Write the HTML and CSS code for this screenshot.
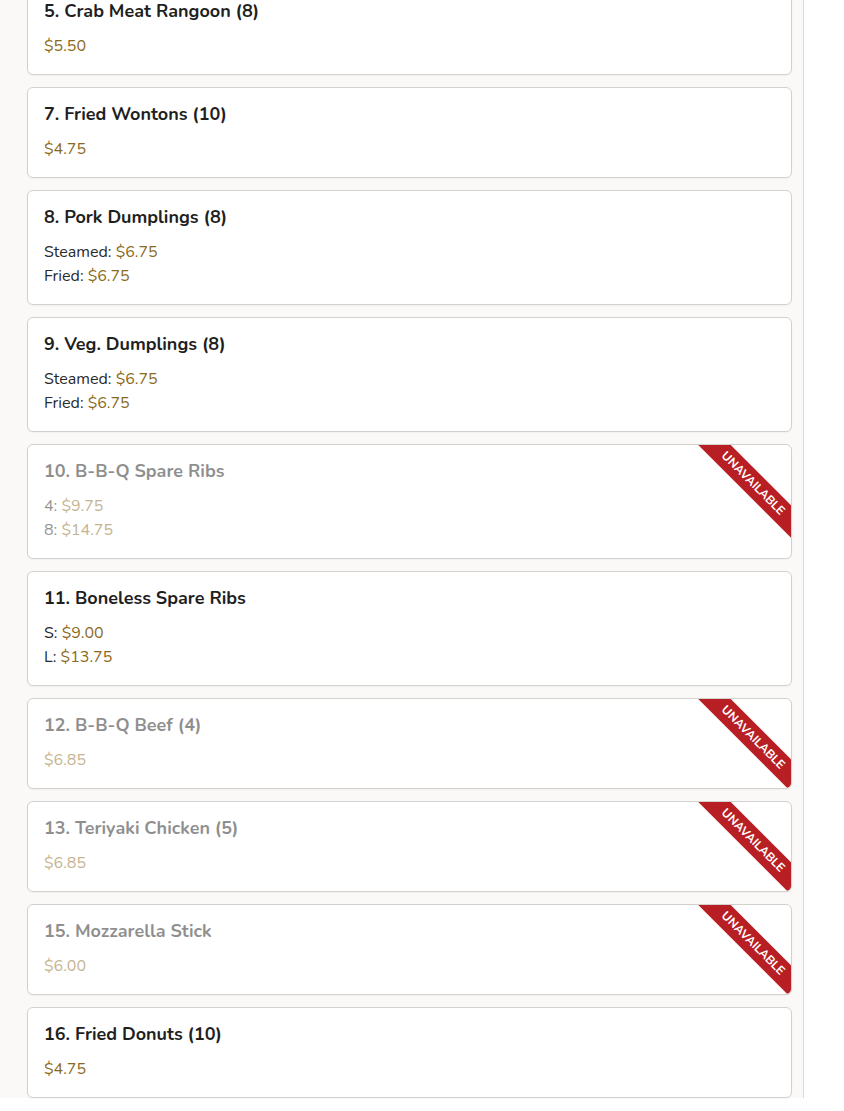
FILE: index.html
```html
<!DOCTYPE html>
<html>
<head>
<meta charset="utf-8">
<link rel="stylesheet" href="styles.css">
</head>
<body>
<div class="page">
  <div class="list">
    <div class="card">
      <div class="title">5. Crab Meat Rangoon (8)</div>
      <div class="prices"><div class="row"><span class="price">$5.50</span></div></div>
    </div>
    <div class="card">
      <div class="title">7. Fried Wontons (10)</div>
      <div class="prices"><div class="row"><span class="price">$4.75</span></div></div>
    </div>
    <div class="card">
      <div class="title">8. Pork Dumplings (8)</div>
      <div class="prices">
        <div class="row">Steamed: <span class="price">$6.75</span></div>
        <div class="row">Fried: <span class="price">$6.75</span></div>
      </div>
    </div>
    <div class="card">
      <div class="title">9. Veg. Dumplings (8)</div>
      <div class="prices">
        <div class="row">Steamed: <span class="price">$6.75</span></div>
        <div class="row">Fried: <span class="price">$6.75</span></div>
      </div>
    </div>
    <div class="card unavailable">
      <div class="ribbon-wrap"><div class="ribbon">UNAVAILABLE</div></div>
      <div class="title">10. B-B-Q Spare Ribs</div>
      <div class="prices">
        <div class="row">4: <span class="price">$9.75</span></div>
        <div class="row">8: <span class="price">$14.75</span></div>
      </div>
    </div>
    <div class="card">
      <div class="title">11. Boneless Spare Ribs</div>
      <div class="prices">
        <div class="row">S: <span class="price">$9.00</span></div>
        <div class="row">L: <span class="price">$13.75</span></div>
      </div>
    </div>
    <div class="card unavailable">
      <div class="ribbon-wrap"><div class="ribbon">UNAVAILABLE</div></div>
      <div class="title">12. B-B-Q Beef (4)</div>
      <div class="prices"><div class="row"><span class="price">$6.85</span></div></div>
    </div>
    <div class="card unavailable">
      <div class="ribbon-wrap"><div class="ribbon">UNAVAILABLE</div></div>
      <div class="title">13. Teriyaki Chicken (5)</div>
      <div class="prices"><div class="row"><span class="price">$6.85</span></div></div>
    </div>
    <div class="card unavailable">
      <div class="ribbon-wrap"><div class="ribbon">UNAVAILABLE</div></div>
      <div class="title">15. Mozzarella Stick</div>
      <div class="prices"><div class="row"><span class="price">$6.00</span></div></div>
    </div>
    <div class="card">
      <div class="title">16. Fried Donuts (10)</div>
      <div class="prices"><div class="row"><span class="price">$4.75</span></div></div>
    </div>
  </div>
</div>
</body>
</html>
```

FILE: styles.css
```css
html, body {
  margin: 0;
  padding: 0;
  background: #ffffff;
}
body {
  font-family: "Nunito", "Lato", "Noto Sans", sans-serif;
  color: #222;
  overflow: hidden;
  height: 1111px;
}
.page {
  width: 804px;
  min-height: 1111px;
  background: #faf9f8;
  border-right: 1px solid #dcdcdc;
  box-sizing: border-box;
  padding: 0 11px 0 27px;
}
.list {
  display: flex;
  flex-direction: column;
  gap: 12px;
  margin-top: -16px;
}
.card {
  position: relative;
  background: #fff;
  border: 1px solid #d3d1ce;
  border-radius: 6px;
  padding: 15px 16px 16px 16px;
  box-shadow: 0 1px 2px rgba(0,0,0,0.04);
  overflow: hidden;
}
.title {
  font-size: 18px;
  font-weight: 700;
  line-height: 22px;
  color: #1f1f1f;
}
.prices {
  margin-top: 12px;
  font-size: 16px;
  line-height: 24px;
  color: #2a2a2a;
}
.price {
  color: #8a6a1c;
}
.unavailable .title,
.unavailable .prices {
  opacity: 0.5;
}
.ribbon-wrap {
  position: absolute;
  top: 0;
  right: 0;
  width: 93px;
  height: 93px;
  overflow: hidden;
}
.ribbon {
  position: absolute;
  width: 140px;
  height: 23px;
  left: -15.5px;
  top: 27px;
  transform: rotate(45deg);
  background: #b81f24;
  color: #fff;
  font-size: 12px;
  font-weight: 700;
  line-height: 23px;
  text-align: center;
  letter-spacing: 0;
}
```
